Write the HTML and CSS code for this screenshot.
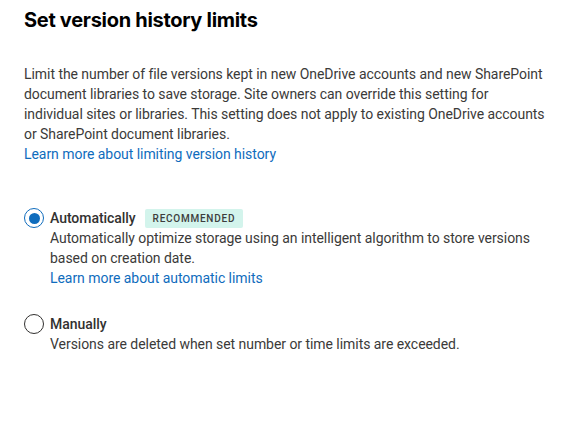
FILE: index.html
```html
<!DOCTYPE html>
<html lang="en">
<head>
    <meta charset="UTF-8">
    <meta name="viewport" content="width=device-width, initial-scale=1.0">
    <title>Set version history limits</title>
    <link rel="stylesheet" href="styles.css">
</head>
<body>
    <div class="panel">
        <h1 class="title">Set version history limits</h1>

        <p class="intro">
            Limit the number of file versions kept in new OneDrive accounts and new SharePoint<br>
            document libraries to save storage. Site owners can override this setting for<br>
            individual sites or libraries. This setting does not apply to existing OneDrive accounts<br>
            or SharePoint document libraries.
            <a href="#" class="link">Learn more about limiting version history</a>
        </p>

        <div class="choices">
            <label class="choice">
                <input type="radio" name="limits" checked>
                <span class="dot"></span>
                <span class="choice-body">
                    <span class="choice-head">
                        <span class="choice-label">Automatically</span>
                        <span class="badge">Recommended</span>
                    </span>
                    <span class="choice-desc">Automatically optimize storage using an intelligent algorithm to store versions<br>based on creation date.</span>
                    <a href="#" class="link">Learn more about automatic limits</a>
                </span>
            </label>

            <label class="choice">
                <input type="radio" name="limits">
                <span class="dot"></span>
                <span class="choice-body">
                    <span class="choice-head">
                        <span class="choice-label">Manually</span>
                    </span>
                    <span class="choice-desc">Versions are deleted when set number or time limits are exceeded.</span>
                </span>
            </label>
        </div>
    </div>
</body>
</html>
```

FILE: styles.css
```css
* {
    margin: 0;
    padding: 0;
    box-sizing: border-box;
}

body {
    background: #fff;
    color: #323130;
    font-family: 'Segoe UI', Roboto, sans-serif;
    font-size: 14px;
    line-height: 20px;
    letter-spacing: -0.05px;
}

.panel {
    padding: 6px 24px 0 24px;
    white-space: nowrap;
}

.title {
    font-family: 'Segoe UI', Inter, sans-serif;
    font-size: 20px;
    line-height: 28px;
    font-weight: 700;
    letter-spacing: -0.3px;
    color: #000;
    margin-bottom: 30px;
}

.intro {
    color: #3b3a39;
}

.link {
    display: block;
    color: #0f6cbd;
    text-decoration: none;
}

.choices {
    margin-top: 44px;
    display: flex;
    flex-direction: column;
    gap: 26px;
}

.choice {
    display: flex;
    gap: 6px;
    cursor: pointer;
}

.choice input {
    display: none;
}

.dot {
    flex: none;
    width: 20px;
    height: 20px;
    border: 1px solid #323130;
    border-radius: 50%;
    display: flex;
    align-items: center;
    justify-content: center;
}

.choice input:checked + .dot {
    border-color: #0f6cbd;
}

.choice input:checked + .dot::after {
    content: '';
    width: 11px;
    height: 11px;
    border-radius: 50%;
    background: #0f6cbd;
}

.choice-body {
    display: flex;
    flex-direction: column;
}

.choice-desc {
    color: #3b3a39;
}

.choice-head {
    display: flex;
    align-items: center;
    gap: 9px;
}

.choice-label {
    font-weight: 500;
    color: #323130;
}

.badge {
    background: #d3f4ec;
    color: #3d3d3d;
    font-size: 10px;
    line-height: 19px;
    font-weight: 500;
    letter-spacing: 0.75px;
    text-transform: uppercase;
    padding: 0 8px;
    border-radius: 2px;
}
```
